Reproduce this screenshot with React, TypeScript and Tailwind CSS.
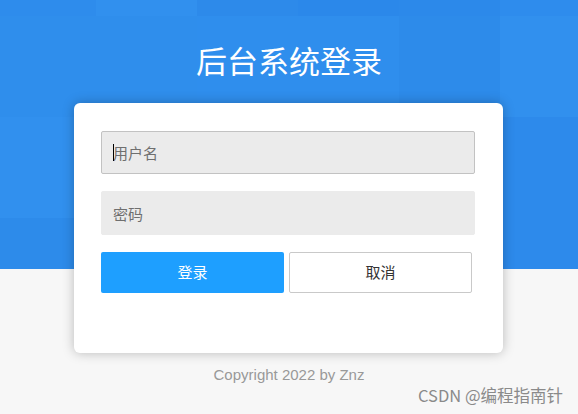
const tiles = [
  "#2e8cec", "#3190ee", "#2d8aea", "#2b88ea", "#2c89ea", "#2e8ced", "#2d8aec",
  "#2f8eec", "#2f8eec", "#2f8eed", "#2f8eed", "#2d8bea", "#3190ee", "#2f8eed",
  "#3190ee", "#2e8dec", "#2e8cec", "#2e8cec", "#2e8cec", "#2d8aeb", "#2e8cec",
  "#2d8bea", "#2e8cec", "#2e8cec", "#2e8cec", "#2e8cec", "#2d8aeb", "#2e8cec",
];

export default function App() {
  return (
    <div className="relative min-h-[414px] w-full overflow-hidden bg-[#f7f7f7] font-['Liberation_Sans','Noto_Sans_CJK_SC',sans-serif]">
      {/* tiled blue band behind the form */}
      <div className="absolute left-0 top-0 h-[269px] w-full overflow-hidden bg-[#2e8cec]">
        <div className="absolute left-[-5px] top-[-85px] grid grid-cols-[repeat(7,101px)] auto-rows-[101px]">
          {tiles.map((c, i) => (
            <div key={i} style={{ backgroundColor: c }} />
          ))}
        </div>
      </div>

      <div className="relative flex flex-col items-center">
        <h1 className="mb-[23px] pt-[40px] text-[31px] font-normal leading-[40px] text-white font-['Noto_Sans_CJK_SC',sans-serif]">
          后台系统登录
        </h1>

        <div className="mr-px w-[429px] rounded-[6px] bg-white pb-[60px] pl-[27px] pr-[28px] pt-[28px] shadow-[0_0_12px_rgba(0,0,0,0.25)] font-['Noto_Sans_CJK_SC',sans-serif]">
          <div className="relative">
            <input
              placeholder="用户名"
              className="h-[43px] w-full rounded-[2px] border border-[#c2c2c2] bg-[#ebebeb] px-[11px] text-[15px] text-[#333] outline-none placeholder:text-[#6f6f6f]"
            />
            <span className="absolute left-[12px] top-[13px] h-[17px] w-px bg-black" />
          </div>
          <input
            type="password"
            placeholder="密码"
            className="mt-[17px] h-[44px] w-full rounded-[2px] border border-[#ebebeb] bg-[#ebebeb] px-[11px] text-[15px] text-[#333] outline-none placeholder:text-[#6f6f6f]"
          />
          <div className="mt-[17px] flex gap-[5px]">
            <button className="h-[41px] w-[183px] rounded-[2px] bg-[#1e9fff] text-[15px] text-white">
              登录
            </button>
            <button className="h-[41px] w-[183px] rounded-[2px] border border-[#c9c9c9] bg-white text-[15px] text-[#333]">
              取消
            </button>
          </div>
        </div>

        <p className="mt-[12px] text-[15px] leading-[20px] text-[#999]">Copyright 2022 by Znz</p>
        <div className="flex w-full justify-end pr-[15px]">
          <span className="text-[16.5px] leading-[20px] text-[#8a8a8a] font-['Noto_Sans_CJK_SC',sans-serif]">
            CSDN @编程指南针
          </span>
        </div>
      </div>
    </div>
  );
}
